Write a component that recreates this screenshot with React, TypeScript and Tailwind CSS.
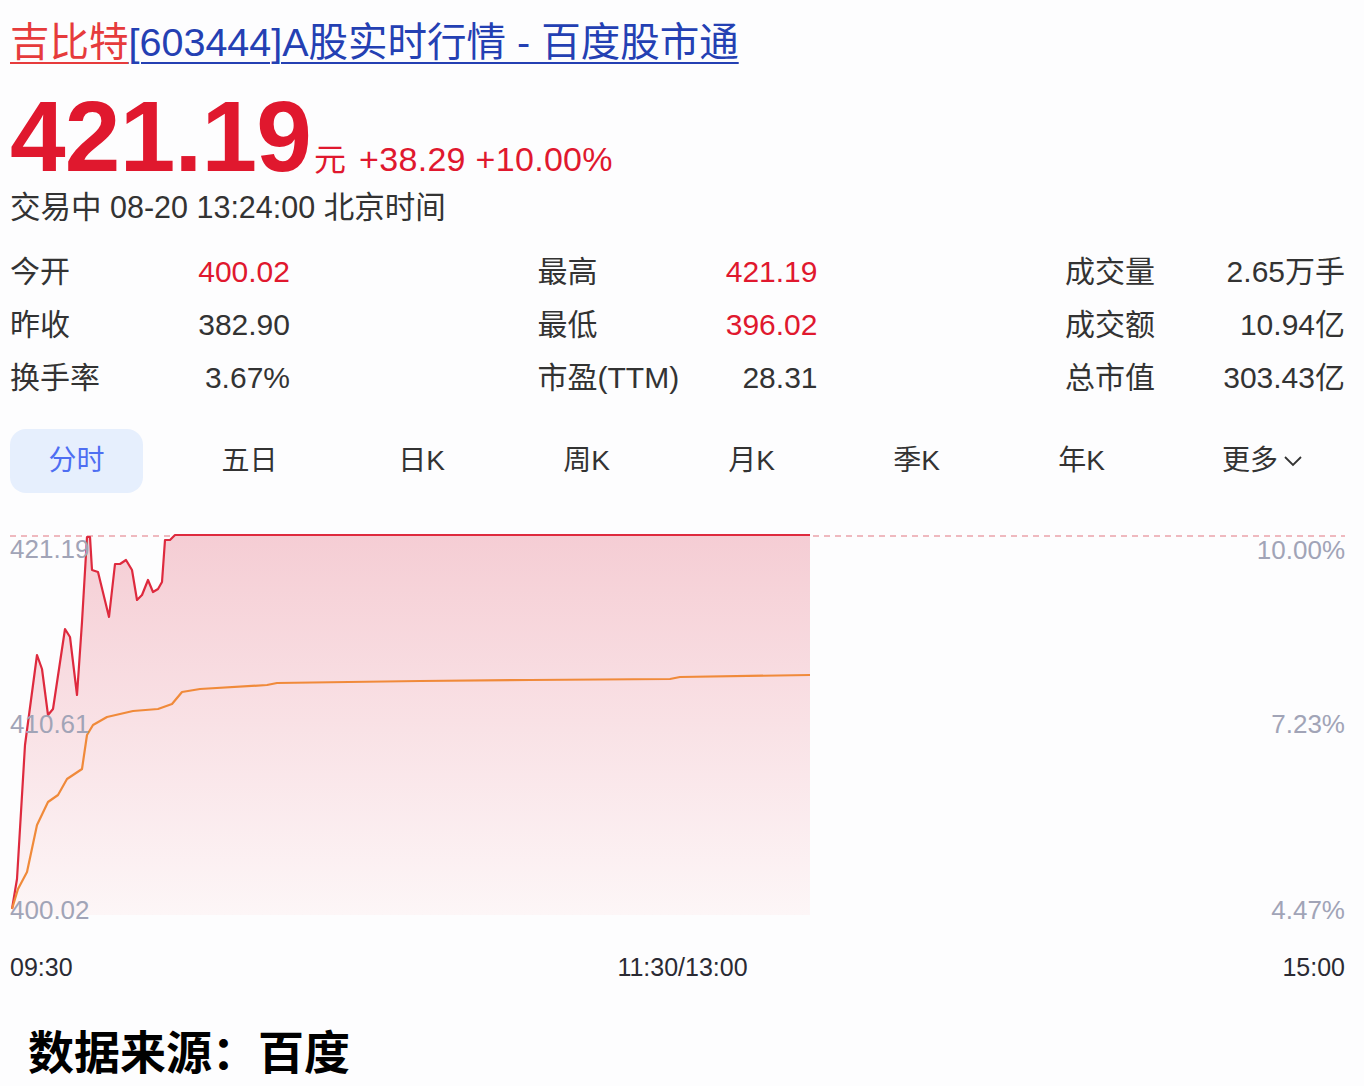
import React from "react";

const font = "font-['Liberation_Sans','Noto_Sans_CJK_SC',sans-serif]";

const stats = [
  [
    { label: "今开", value: "400.02", up: true },
    { label: "最高", value: "421.19", up: true },
    { label: "成交量", value: "2.65万手" },
  ],
  [
    { label: "昨收", value: "382.90" },
    { label: "最低", value: "396.02", up: true },
    { label: "成交额", value: "10.94亿" },
  ],
  [
    { label: "换手率", value: "3.67%" },
    { label: "市盈(TTM)", value: "28.31" },
    { label: "总市值", value: "303.43亿" },
  ],
];

const tabs = [
  { name: "分时", cls: "" },
  { name: "五日", cls: "ml-[8px]" },
  { name: "日K", cls: "ml-[7px]" },
  { name: "周K", cls: "" },
  { name: "月K", cls: "" },
  { name: "季K", cls: "" },
  { name: "年K", cls: "" },
];

// chart coords: x = pageX - 10, y = pageY - 533
const pricePts: [number, number][] = [
  [2, 374], [7, 344], [15, 210], [27, 120], [32, 134], [38, 180], [43, 174],
  [55, 94], [60, 102], [67, 160], [72, 87], [77, 2], [80, 2], [82, 35],
  [88, 37], [99, 82], [105, 29], [110, 29], [116, 25], [122, 35], [127, 65],
  [132, 60], [138, 45], [143, 57], [148, 54], [152, 47], [155, 5], [160, 5],
  [165, 0], [800, 0],
];

const avgPts: [number, number][] = [
  [2, 374], [8, 354], [17, 337], [27, 290], [38, 267], [48, 260], [57, 244],
  [72, 234], [77, 200], [83, 190], [97, 182], [123, 176], [148, 174],
  [162, 169], [172, 157], [190, 154], [257, 150], [267, 148], [410, 146],
  [520, 145], [660, 144], [670, 142], [800, 140],
];

const toPath = (pts: [number, number][]) =>
  pts.map(([x, y], i) => `${i === 0 ? "M" : "L"}${x} ${y}`).join(" ");

function Chart() {
  const line = toPath(pricePts);
  const area = `${line} L800 380 L2 380 Z`;
  return (
    <div className="relative mt-[42px] h-[374px] w-full">
      <svg
        className="absolute inset-0 overflow-visible"
        width="1335"
        height="374"
        viewBox="0 0 1335 374"
      >
        <defs>
          <linearGradient id="fillRed" x1="0" y1="0" x2="0" y2="1">
            <stop offset="0%" stopColor="#f5cdd4" />
            <stop offset="100%" stopColor="#fdf6f7" />
          </linearGradient>
        </defs>
        <line
          x1="0"
          y1="1"
          x2="1335"
          y2="1"
          stroke="#eaa3ab"
          strokeWidth="1.5"
          strokeDasharray="6 5"
        />
        <path d={area} fill="url(#fillRed)" />
        <path d={line} fill="none" stroke="#de2a3e" strokeWidth="2.2" strokeLinejoin="round" />
        <path d={toPath(avgPts)} fill="none" stroke="#f08a3a" strokeWidth="2.2" strokeLinejoin="round" />
      </svg>

      <span className="absolute left-0 top-[1px] text-[26px] leading-none text-[#a1a4b7]">421.19</span>
      <span className="absolute left-0 top-[176px] text-[26px] leading-none text-[#a1a4b7]">410.61</span>
      <span className="absolute left-0 top-[362px] text-[26px] leading-none text-[#a1a4b7]">400.02</span>
      <span className="absolute right-0 top-[2px] text-[26px] leading-none text-[#a1a4b7]">10.00%</span>
      <span className="absolute right-0 top-[176px] text-[26px] leading-none text-[#a1a4b7]">7.23%</span>
      <span className="absolute right-0 top-[362px] text-[26px] leading-none text-[#a1a4b7]">4.47%</span>
    </div>
  );
}

export default function App() {
  return (
    <div className={`${font} h-[1086px] w-[1364px] overflow-hidden bg-[#fdfdfe] pl-[10px] pr-[19px]`}>
      <div className="pt-[20px] text-[39.5px] leading-[44px]">
        <span className="text-[#e63b3c] underline decoration-2 underline-offset-[6px]">吉比特</span>
        <span className="text-[#2440b3] underline decoration-2 underline-offset-[6px]">
          [603444]A股实时行情 - 百度股市通
        </span>
      </div>

      <div className="mt-[22px] flex items-baseline leading-none">
        <span className="text-[100px] font-bold tracking-[-0.8px] text-[#e0182e]">421.19</span>
        <span className="ml-[3px] text-[32px] text-[#e0182e]">元</span>
        <span className="ml-[13px] text-[34px] tracking-[0.3px] text-[#e0182e]">+38.29 +10.00%</span>
      </div>

      <div className="mt-[6px] text-[30.5px] leading-none text-[#333]">交易中 08-20 13:24:00 北京时间</div>

      <div className="mt-[33px] flex flex-col gap-[21px]">
        {stats.map((row, r) => (
          <div key={r} className="flex text-[30px] leading-[32px]">
            {row.map((s, c) => (
              <div key={c} className={c < 2 ? "w-[528px]" : "flex-1"}>
                <div className="flex w-[280px] justify-between">
                  <span className="text-[#333]">{s.label}</span>
                  <span className={s.up ? "text-[#e0182e]" : "text-[#333]"}>{s.value}</span>
                </div>
              </div>
            ))}
          </div>
        ))}
      </div>

      <div className="mt-[35px] flex gap-[32px] text-[28px] text-[#333]">
        {tabs.map((t, i) => (
          <div
            key={t.name}
            className={`flex h-[64px] w-[133px] items-center justify-center rounded-[16px] ${t.cls} ${
              i === 0 ? "bg-[#e6effd] text-[#4e6ef2]" : ""
            }`}
          >
            {t.name}
          </div>
        ))}
        <div className="ml-[16px] flex h-[64px] w-[133px] items-center justify-center gap-[5px]">
          更多
          <svg width="20" height="12" viewBox="0 0 20 12" fill="none">
            <path d="M2 2l8 8 8-8" stroke="#333" strokeWidth="1.8" />
          </svg>
        </div>
      </div>

      <Chart />

      <div className="mt-[46px] flex justify-between text-[25px] leading-none text-[#2a2a33]">
        <span>09:30</span>
        <span className="ml-[10px]">11:30/13:00</span>
        <span>15:00</span>
      </div>

      <div className="mt-[50px] pl-[18px] text-[46px] font-bold leading-none text-black">数据来源：百度</div>
    </div>
  );
}
